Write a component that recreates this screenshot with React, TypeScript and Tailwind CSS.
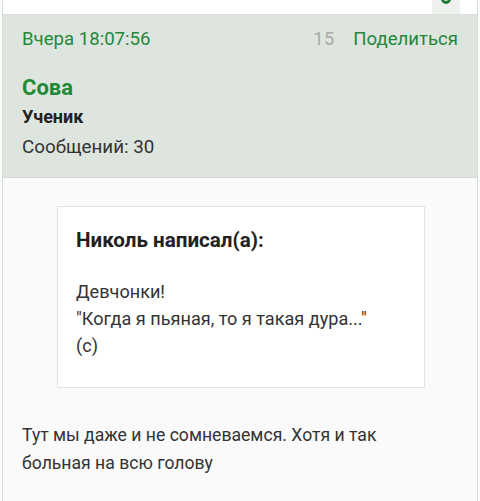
export default function App() {
  return (
    <div className="w-[480px] h-[501px] overflow-hidden bg-[#fafafa] font-['Roboto',sans-serif]">
      <div className="mx-[2px] h-full border-x border-[#d3e2d3]">
        {/* previous post tail */}
        <div className="h-[15px] bg-white border-b border-[#d8e0d8] flex justify-end pr-[17px]">
          <div className="w-[28px] h-full bg-[#eef1ee] flex justify-center overflow-hidden">
            <div className="w-[10px] h-[10px] shrink-0 rounded-full border-[3px] border-[#1f7a33] -mt-[6px]" />
          </div>
        </div>

        {/* post header */}
        <div className="bg-[#dee4de] border-b border-[#d0d8d0] h-[163px] px-[19px]">
          <div className="flex items-center h-[50px] text-[18.6px]">
            <span className="text-[#23883a]">Вчера 18:07:56</span>
            <span className="ml-auto text-[#a9aca9]">15</span>
            <span className="ml-[19px] text-[#23883a]">Поделиться</span>
          </div>
          <div className="pt-[9px]">
            <div className="text-[22px] leading-[28px] font-bold text-[#1f8a36]">Сова</div>
            <div className="text-[18px] leading-[26px] font-bold text-[#222] mt-[2px]">Ученик</div>
            <div className="text-[18.8px] leading-[26px] text-[#333] mt-[4px]">Сообщений: 30</div>
          </div>
        </div>

        {/* post body */}
        <div className="pl-[19px] pr-[40px] pt-[28px]">
          <div className="ml-[35px] mr-[12px] bg-white border border-[#e2e4e2] h-[182px] px-[18px] pt-[21px]">
            <div className="text-[20.6px] leading-[24px] font-bold text-[#222]">Николь написал(а):</div>
            <div className="mt-[26px] text-[18.1px] leading-[27px] text-[#333]">
              Девчонки!
              <br />
              "Когда я пьяная, то я такая дура..."
              <br />
              (с)
            </div>
          </div>
          <div className="mt-[33px] text-[17.6px] leading-[28px] text-[#333]">
            Тут мы даже и не сомневаемся. Хотя и так больная на всю голову
          </div>
        </div>
      </div>
    </div>
  );
}
